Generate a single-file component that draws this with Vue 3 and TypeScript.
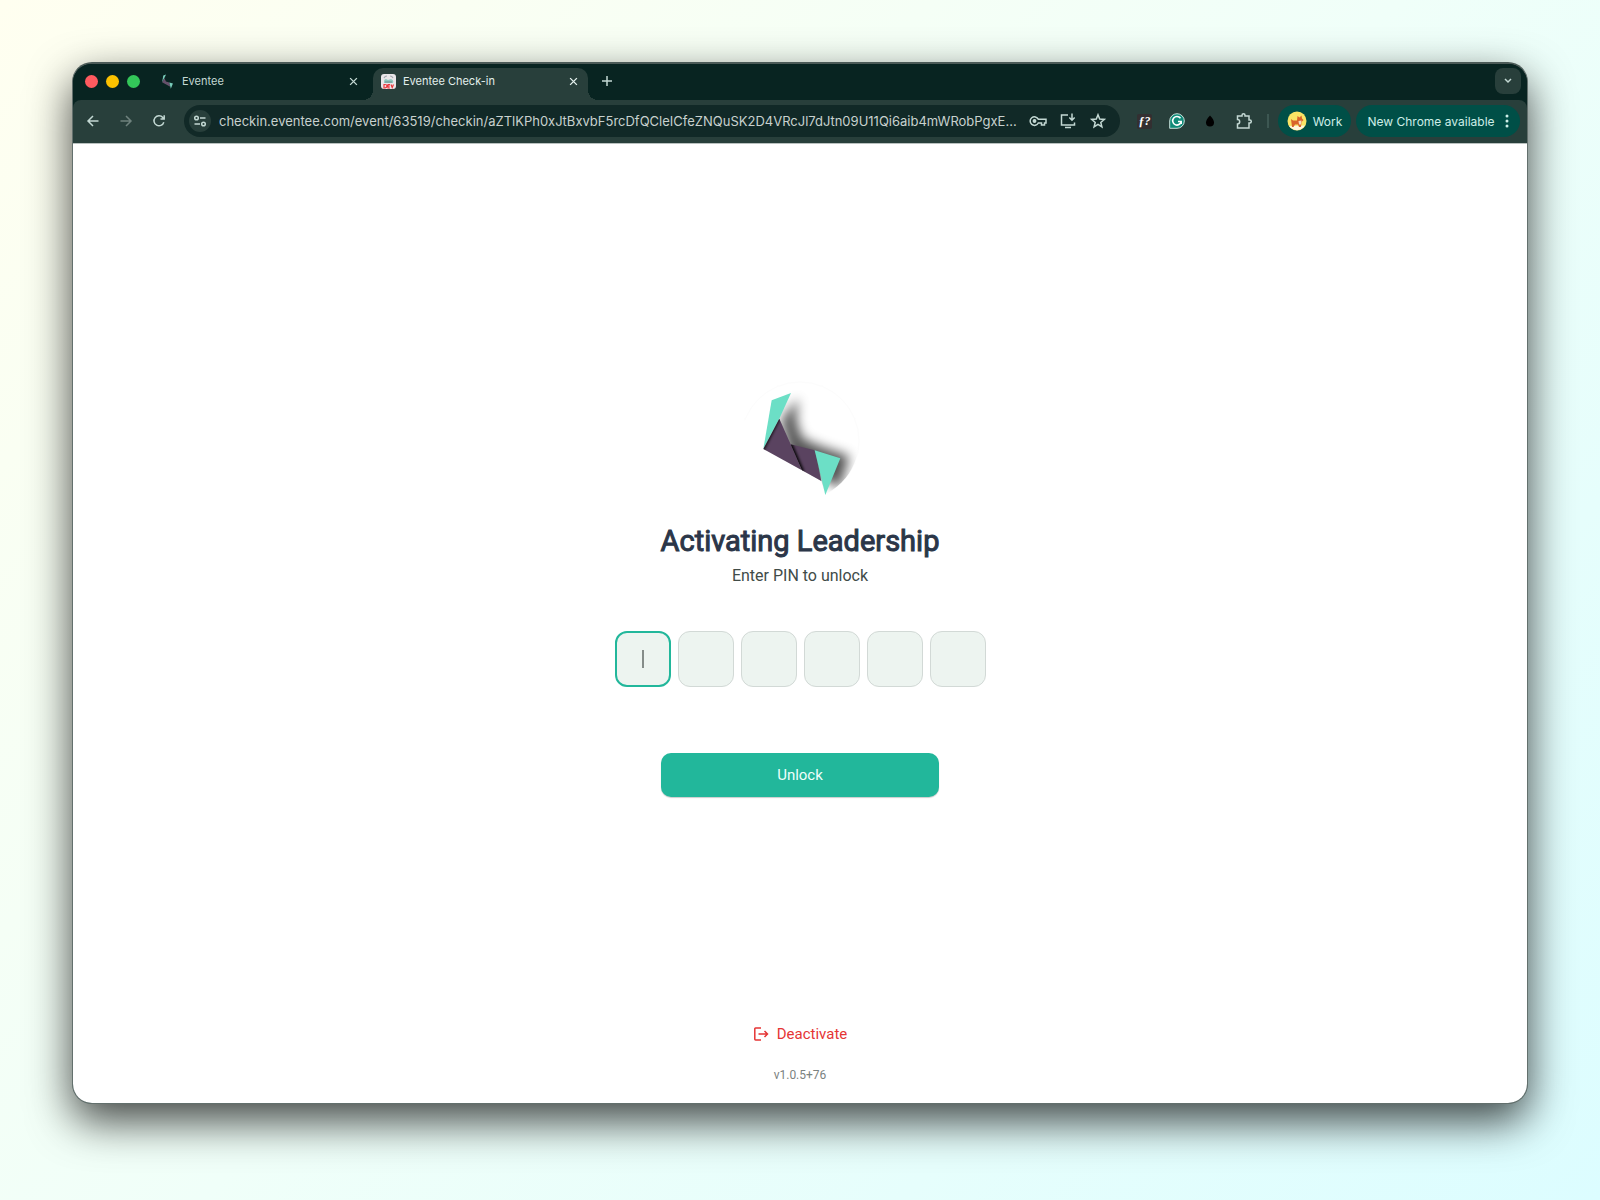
<script setup lang="ts">
import { ref } from 'vue'

const url = ref(
  'checkin.eventee.com/event/63519/checkin/aZTlKPh0xJtBxvbF5rcDfQCleICfeZNQuSK2D4VRcJl7dJtn09U11Qi6aib4mWRobPgxE...',
)
const pin = ref<string[]>(['', '', '', '', '', ''])
</script>

<template>
  <div class="desktop">
    <div class="window">
      <header class="tabs">
        <div class="lights">
          <button class="light red" aria-label="Close window"></button>
          <button class="light yellow" aria-label="Minimise window"></button>
          <button class="light green" aria-label="Zoom window"></button>
        </div>
        <div class="tab">
          <svg class="favicon" viewBox="120 60 250 320" aria-hidden="true">
            <path fill="#79cdbb" d="M213 68 155 90 130 236 178 145z" />
            <path fill="#65516b" d="M178 145 130 236 304 332 284 240 212 222z" />
            <path fill="#79cdbb" d="M284 240 361 264 316 374z" />
          </svg>
          <span class="tab-title">Eventee</span>
          <button class="close" aria-label="Close Eventee">
            <svg viewBox="0 0 8 8"><path d="M1 1l6 6M7 1l-6 6" /></svg>
          </button>
        </div>
        <div class="tab active">
          <svg class="favicon" viewBox="0 0 15 15" aria-hidden="true">
            <rect width="15" height="15" rx="3" fill="#e9e6e9" />
            <path d="M3 4q1-2 3-2M9 2q2 0 3 2" stroke="#a5aab0" stroke-width="1.2" fill="none" />
            <path d="M3 8q0-3 2-3l2 1 3-1q3 1 2 4H3z" fill="#8fc9bf" />
            <path d="M4 8h7" stroke="#6c8d91" stroke-width="1" />
            <path d="M3 10.500h1q2 0 2 1.500T4 14H3zM9 10.500H7V14h2M7 12h2M10 10.500l1.200 3L12.500 10.500" stroke="#e9383c" stroke-width="1.200" fill="none" />
          </svg>
          <span class="tab-title">Eventee Check-in</span>
          <button class="close" aria-label="Close Eventee Check-in">
            <svg viewBox="0 0 8 8"><path d="M1 1l6 6M7 1l-6 6" /></svg>
          </button>
        </div>
        <button class="new-tab" aria-label="New tab">
          <svg viewBox="0 0 10 10"><path d="M5 0v10M0 5h10" /></svg>
        </button>
        <button class="tab-search" aria-label="Search tabs">
          <svg viewBox="0 0 8 6"><path d="M1 1l3 3 3-3" /></svg>
        </button>
      </header>

      <nav class="toolbar">
        <div class="nav-buttons">
          <button aria-label="Back">
            <svg class="i16" viewBox="0 0 16 16"><path d="M13.500 8H3M8 3L3 8l5 5" /></svg>
          </button>
          <button class="dim" aria-label="Forward">
            <svg class="i16" viewBox="0 0 16 16"><path d="M2.500 8H13M8 3l5 5-5 5" /></svg>
          </button>
          <button aria-label="Reload">
            <svg class="i16" viewBox="0 0 16 16"><path d="M12.800 9.200A5 5 0 1 1 11.800 4.500L13 5.800M13.200 2.200V6H9.500" /></svg>
          </button>
        </div>
        <div class="omnibox">
          <button class="site-info" aria-label="Site information">
            <svg viewBox="0 0 14 12">
              <circle cx="3.500" cy="3" r="1.800" />
              <path d="M7 3h5.500M1.500 9H7" />
              <circle cx="10.500" cy="9" r="1.800" />
            </svg>
          </button>
          <input v-model="url" class="url" type="text" aria-label="Address" spellcheck="false" />
          <div class="actions">
            <button aria-label="Passwords">
              <svg class="i18" viewBox="0 0 18 18">
                <path d="M9.300 7.200H17V11H15.500V13H12.500V11H9.300A4.300 4.300 0 1 1 9.300 7.200z" />
                <circle cx="5.500" cy="9" r="1.200" fill="currentColor" />
              </svg>
            </button>
            <button aria-label="Install app">
              <svg class="i18" viewBox="0 0 18 18">
                <path d="M9 3H2.500V13H15.500V10.500M6 15.500h6" />
                <path d="M13 1.500V8M10.300 5.500L13 8.200l2.700-2.700" />
              </svg>
            </button>
            <button aria-label="Bookmark">
              <svg class="i18" viewBox="0 0 18 18">
                <path d="M9 2.800l1.700 4.300 4.600.3-3.500 3 1.100 4.500L9 12.400l-3.900 2.500 1.100-4.500-3.500-3 4.600-.3z" />
              </svg>
            </button>
          </div>
        </div>
        <div class="extensions">
          <button class="fn" aria-label="Font finder"><i>ƒ?</i></button>
          <button aria-label="Grammarly">
            <svg class="i16" viewBox="0 0 16 16">
              <path d="M8 .7A7.300 7.300 0 1 1 8 15.300H.7V8A7.300 7.300 0 0 1 8 .7z" fill="#0f8a78" stroke="#c5ded8" stroke-width="1" />
              <path d="M11.500 5.300A4.300 4.300 0 1 0 12.200 8.500H9M12.200 8.500V11" stroke="#fff" stroke-width="1.600" />
            </svg>
          </button>
          <button aria-label="Colour picker">
            <svg class="i16" viewBox="0 0 16 16"><path d="M8 2.500q4 4 4 7a4 4 0 0 1-8 0q0-3 4-7z" fill="#000" stroke="none" /></svg>
          </button>
          <button aria-label="Extensions">
            <svg class="i18" viewBox="0 0 18 18">
              <path d="M2.500 4H7V3.200a1.500 1.500 0 0 1 3 0V4h4v4h.8a1.500 1.500 0 0 1 0 3H14v5H2.500v-4a2.200 2.200 0 0 0 0-4.400z" />
            </svg>
          </button>
        </div>
        <span class="divider"></span>
        <button class="chip profile">
          <svg viewBox="0 0 20 20" aria-hidden="true">
            <circle cx="10" cy="10" r="9.500" fill="#f9e465" />
            <path d="M2 15a9.500 9.500 0 0 0 16-.500z" fill="#fff6dd" />
            <path d="M4 8l2 1.500h4L10.500 5l2 1.500 2-2 .5 3 1.500 1.500-2 2-.5 5h-2l-1-2.500H8L6.500 16H5z" fill="#d9642b" />
            <path d="M11.500 10l3-.500-.500 4h-2z" fill="#f7d9c0" />
          </svg>
          <span>Work</span>
        </button>
        <button class="chip update">
          <span>New Chrome available</span>
          <svg viewBox="0 0 4 14" aria-hidden="true">
            <circle cx="2" cy="2" r="1.500" /><circle cx="2" cy="7" r="1.500" /><circle cx="2" cy="12" r="1.500" />
          </svg>
        </button>
      </nav>

      <main class="page">
        <form class="unlock" @submit.prevent>
          <svg class="logo" viewBox="60 32 360 360" role="img" aria-label="Event logo">
            <defs>
              <clipPath id="disc"><circle cx="240" cy="212" r="176" /></clipPath>
              <filter id="soft" x="-50%" y="-50%" width="200%" height="200%"><feGaussianBlur stdDeviation="17" /></filter>
              <filter id="crease" x="-50%" y="-50%" width="200%" height="200%"><feGaussianBlur stdDeviation="4" /></filter>
              <clipPath id="strip-a"><path d="M178 145 130 236 246 300 212 222z" /></clipPath>
              <clipPath id="strip-b"><path d="M212 222 284 240 304 332 246 300z" /></clipPath>
            </defs>
            <circle cx="240" cy="212" r="177" fill="#fff" stroke="#fcfcfc" stroke-width="3" />
            <g clip-path="url(#disc)">
              <path d="M234 84 184 150 210 260 300 320 360 352 388 258 300 228 246 204 228 150z" fill="#000" opacity=".68" filter="url(#soft)" />
            </g>
            <path fill="#fff" d="M130 236 304 332 316 374 316 400 60 400 60 160 155 90z" />
            <path fill="#6cdfc6" d="M213 68 155 90 130 236 178 145z" />
            <path fill="#5a4360" d="M178 145 130 236 246 300 212 222z" />
            <g clip-path="url(#strip-a)">
              <path d="M178 140 128 238" stroke="#000" stroke-width="8" filter="url(#crease)" />
            </g>
            <path fill="#5a4360" d="M212 222 284 240 304 332 246 300z" />
            <g clip-path="url(#strip-b)">
              <path d="M208 218 246 306" stroke="#000" stroke-width="14" filter="url(#crease)" />
            </g>
            <path fill="#6cdfc6" d="M284 240 361 264 316 374z" />
          </svg>
          <h1>Activating Leadership</h1>
          <p class="hint">Enter PIN to unlock</p>
          <div class="pin">
            <div v-for="(_, i) in pin" :key="i" class="cell" :class="{ focused: i === 0 }">
              <input v-model="pin[i]" type="password" inputmode="numeric" maxlength="1" :aria-label="`PIN digit ${i + 1}`" />
              <span v-if="i === 0" class="caret"></span>
            </div>
          </div>
          <button class="submit" type="submit">Unlock</button>
        </form>
        <footer>
          <button class="deactivate">
            <svg class="i16" viewBox="0 0 16 16" aria-hidden="true">
              <path d="M8 2H2.500Q1.800 2 1.800 2.700V13.300Q1.800 14 2.500 14H8M5.500 8H14.500M11.500 5l3 3-3 3" />
            </svg>
            <span>Deactivate</span>
          </button>
          <p class="version">v1.0.5+76</p>
        </footer>
      </main>
    </div>
  </div>
</template>

<style>
body {
  margin: 0;
}
</style>

<style scoped>
* {
  box-sizing: border-box;
}
button {
  display: flex;
  align-items: center;
  justify-content: center;
  flex: none;
  margin: 0;
  padding: 0;
  border: 0;
  background: none;
  color: inherit;
  font: inherit;
}
svg {
  display: block;
  flex: none;
  fill: none;
  stroke: currentColor;
  stroke-width: 1.5;
}
.logo,
.favicon,
.chip svg {
  stroke: none;
}
.i16 {
  width: 16px;
  height: 16px;
}
.i18 {
  width: 18px;
  height: 18px;
}
.desktop {
  display: flex;
  min-height: 100vh;
  padding: 62px 72px 96px;
  background: linear-gradient(135deg, #fffff0 0%, #f0fff9 50%, #dcfdff 100%);
  font-family: Inter, 'Liberation Sans', sans-serif;
}
.window {
  display: flex;
  flex: 1;
  flex-direction: column;
  min-width: 0;
  overflow: hidden;
  border: 1px solid #63706d;
  border-top: 2px solid #4b5a57;
  border-radius: 20px;
  background: #082421;
  box-shadow: 0 17px 44px rgba(0, 0, 0, 0.73);
}
.tabs {
  display: flex;
  align-items: center;
  height: 36px;
  padding: 0 6px 2px 12px;
  background: #082421;
  color: #c3d8d3;
  font-size: 11px;
}
.lights {
  display: flex;
  gap: 8px;
  margin-right: 20px;
}
.light {
  width: 13px;
  height: 13px;
  border-radius: 50%;
}
.red {
  background: #ff5a5f;
}
.yellow {
  background: #fcc200;
}
.green {
  background: #33c759;
}
.tab {
  display: flex;
  align-items: center;
  gap: 7px;
  width: 213px;
  height: 32px;
  padding: 0 15px 0 0;
}
.tab.active {
  position: relative;
  align-self: flex-end;
  width: 215px;
  margin-bottom: -2px;
  padding: 0 10px 6px 8px;
  border-radius: 10px 10px 0 0;
  background: #283f3b;
  color: #e3efec;
}
.tab.active::before,
.tab.active::after {
  position: absolute;
  bottom: 0;
  width: 10px;
  height: 10px;
  content: '';
}
.tab.active::before {
  right: 100%;
  background: radial-gradient(circle at 0 0, transparent 10px, #283f3b 10px);
}
.tab.active::after {
  left: 100%;
  background: radial-gradient(circle at 100% 0, transparent 10px, #283f3b 10px);
}
.favicon {
  width: 15px;
  height: 15px;
}
.tab-title {
  flex: 1;
}
.close {
  width: 10px;
  height: 16px;
}
.close svg {
  width: 9px;
  height: 9px;
  stroke-width: 1.2;
}
.new-tab {
  width: 20px;
  height: 20px;
  margin-left: 9px;
}
.new-tab svg {
  width: 10px;
  height: 10px;
}
.tab-search {
  width: 26px;
  height: 26px;
  margin-left: auto;
  border-radius: 8px;
  background: #283f3b;
}
.tab-search svg {
  width: 8px;
  height: 6px;
}
.toolbar {
  display: flex;
  align-items: center;
  height: 43px;
  padding: 0 7px 1px 12px;
  border-radius: 8px 8px 0 0;
  background: #283f3b;
  color: #c3d8d3;
  font-size: 12px;
}
.nav-buttons {
  display: flex;
  gap: 17px;
  margin-right: 17px;
}
.dim {
  color: #6f827e;
}
.omnibox {
  display: flex;
  flex: 1;
  align-items: center;
  min-width: 0;
  height: 32px;
  padding: 0 13px 0 5px;
  border-radius: 16px;
  background: #112927;
}
.site-info {
  width: 22px;
  height: 22px;
  border-radius: 50%;
  background: #283f3b;
}
.site-info svg {
  width: 14px;
  height: 12px;
}
.url {
  flex: 1;
  min-width: 0;
  height: 24px;
  margin: 0 8px;
  padding: 0;
  border: 0;
  outline: 0;
  background: none;
  color: #c8d1ce;
  font: 13px/24px Inter, 'Liberation Sans', sans-serif;
}
.actions {
  display: flex;
  gap: 12px;
}
.extensions {
  display: flex;
  gap: 17px;
  margin-left: 17px;
}
.fn {
  width: 15px;
  height: 15px;
  align-self: center;
  border-radius: 2px;
  background: #332f31;
  color: #fff;
  font: bold 12px/15px 'Liberation Serif', serif;
}
.divider {
  width: 2px;
  height: 14px;
  margin: 0 9px 0 14px;
  background: #3d5752;
}
.chip {
  height: 32px;
  border-radius: 16px;
  background: #004f47;
  color: #cdeee7;
}
.profile {
  gap: 6px;
  width: 73px;
  margin-right: 5px;
}
.profile svg {
  width: 20px;
  height: 20px;
}
.update {
  gap: 10px;
  width: 164px;
}
.update svg {
  width: 4px;
  height: 14px;
  fill: currentColor;
}
.page {
  display: flex;
  flex: 1;
  flex-direction: column;
  align-items: center;
  padding: 237px 24px 20px;
  border-top: 1px solid #b9c1bf;
  background: #fff;
  font-family: Roboto, 'Liberation Sans', sans-serif;
}
.unlock {
  display: flex;
  flex-direction: column;
  align-items: center;
}
.logo {
  width: 120px;
  height: 120px;
}
h1 {
  margin: 22px 0 0;
  color: #2b3648;
  font-size: 29px;
  font-weight: 400;
  line-height: 36px;
  -webkit-text-stroke: 1px #2b3648;
}
.hint {
  margin: 7px 0 0;
  color: #414b48;
  font-size: 16px;
  line-height: 20px;
}
.pin {
  display: flex;
  gap: 7px;
  margin-top: 45px;
}
.cell {
  position: relative;
  width: 56px;
  height: 56px;
}
.cell input {
  width: 100%;
  height: 100%;
  padding: 0;
  border: 1px solid #d2d9d6;
  border-radius: 12px;
  outline: 0;
  background: #edf4f0;
  color: #2b3648;
  font-size: 20px;
  text-align: center;
}
.cell.focused input {
  border: 2px solid #22b79b;
}
.caret {
  position: absolute;
  top: 19px;
  left: 27px;
  width: 2px;
  height: 18px;
  background: #858c89;
}
.submit {
  width: 278px;
  height: 44px;
  margin-top: 66px;
  border-radius: 10px;
  background: #22b79b;
  box-shadow: 0 1px 1px rgba(0, 0, 0, 0.2);
  color: #effffb;
  font-size: 15px;
}
footer {
  display: flex;
  flex-direction: column;
  align-items: center;
  margin-top: auto;
}
.deactivate {
  gap: 8px;
  height: 20px;
  color: #e53535;
  font-size: 15px;
}
.version {
  margin: 23px 0 0;
  color: #7b8280;
  font-size: 12px;
  line-height: 16px;
}
</style>
